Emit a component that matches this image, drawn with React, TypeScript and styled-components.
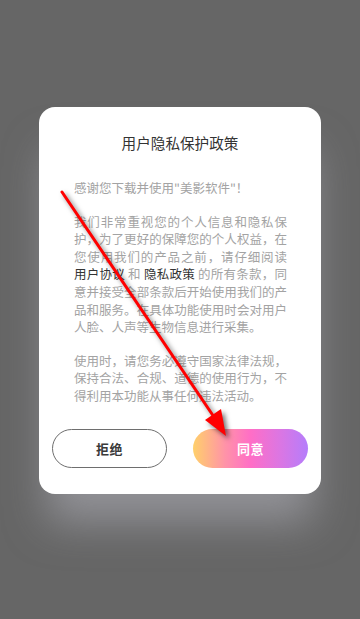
import React from 'react';
import styled, { createGlobalStyle } from 'styled-components';

const GlobalStyle = createGlobalStyle`
  html, body {
    margin: 0;
    padding: 0;
    background: #666666;
  }
  * {
    box-sizing: border-box;
  }
`;

const Screen = styled.div`
  position: relative;
  width: 360px;
  height: 619px;
  overflow: hidden;
  background: #666666;
  display: flex;
  flex-direction: column;
  align-items: center;
  padding-top: 107px;
  font-family: "Noto Sans CJK SC", "Noto Sans", sans-serif;
`;

const Dialog = styled.div`
  width: 282px;
  background: #ffffff;
  border-radius: 16px;
  box-shadow: 0 36px 42px -8px rgba(190, 190, 200, 0.5);
  display: flex;
  flex-direction: column;
  padding: 26px 0 26px;
`;

const Title = styled.h2`
  margin: 0;
  font-size: 14.6px;
  line-height: 20px;
  font-weight: 400;
  color: #333333;
  text-align: center;
`;

const Body = styled.div`
  margin-top: 26px;
  padding: 0 34px 0 35px;
  display: flex;
  flex-direction: column;
  gap: 16px;
`;

const Paragraph = styled.p`
  margin: 0;
  font-size: 12.5px;
  line-height: 17.6px;
  color: #a3a3a3;
  text-align: justify;
`;

const Link = styled.span`
  color: #333333;
  white-space: nowrap;
`;

const Actions = styled.div`
  margin-top: 24px;
  padding: 0 13px;
  display: flex;
  justify-content: space-between;
`;

const Button = styled.button<{ $primary?: boolean }>`
  width: 115px;
  height: 39px;
  border-radius: 20px;
  font-family: inherit;
  font-size: 13px;
  font-weight: 700;
  letter-spacing: 0.5px;
  cursor: pointer;
  border: ${p => (p.$primary ? 'none' : '1px solid #6e6e6e')};
  color: ${p => (p.$primary ? '#ffffff' : '#3a3a3a')};
  background: ${p =>
    p.$primary
      ? 'linear-gradient(90deg, #ffd06a 0%, #ff93a8 28%, #ff6ec6 50%, #dc76e2 75%, #b57dfb 100%)'
      : '#ffffff'};
`;

const Overlay = styled.svg`
  position: absolute;
  left: 0;
  top: 0;
  width: 360px;
  height: 619px;
  pointer-events: none;
  filter: drop-shadow(3px 3px 2.5px rgba(0, 0, 0, 0.55));
`;

function Arrow() {
  return (
    <Overlay viewBox="0 0 360 619">
      <line x1="62" y1="192" x2="214" y2="417" stroke="#ff0000" strokeWidth="3" strokeLinecap="round" />
      <polygon points="226,436 205,420 221,409" fill="#ff0000" />
    </Overlay>
  );
}

export default function App() {
  return (
    <>
      <GlobalStyle />
      <Screen>
        <Dialog>
          <Title>用户隐私保护政策</Title>
          <Body>
            <Paragraph>感谢您下载并使用"美影软件"！</Paragraph>
            <Paragraph>
              我们非常重视您的个人信息和隐私保护，为了更好的保障您的个人权益，在您使用我们的产品之前，请仔细阅读
              <Link>用户协议</Link> 和 <Link>隐私政策</Link>{' '}
              的所有条款，同意并接受全部条款后开始使用我们的产品和服务。在具体功能使用时会对用户人脸、人声等生物信息进行采集。
            </Paragraph>
            <Paragraph>
              使用时，请您务必遵守国家法律法规，保持合法、合规、道德的使用行为，不得利用本功能从事任何违法活动。
            </Paragraph>
          </Body>
          <Actions>
            <Button>拒绝</Button>
            <Button $primary>同意</Button>
          </Actions>
        </Dialog>
        <Arrow />
      </Screen>
    </>
  );
}
